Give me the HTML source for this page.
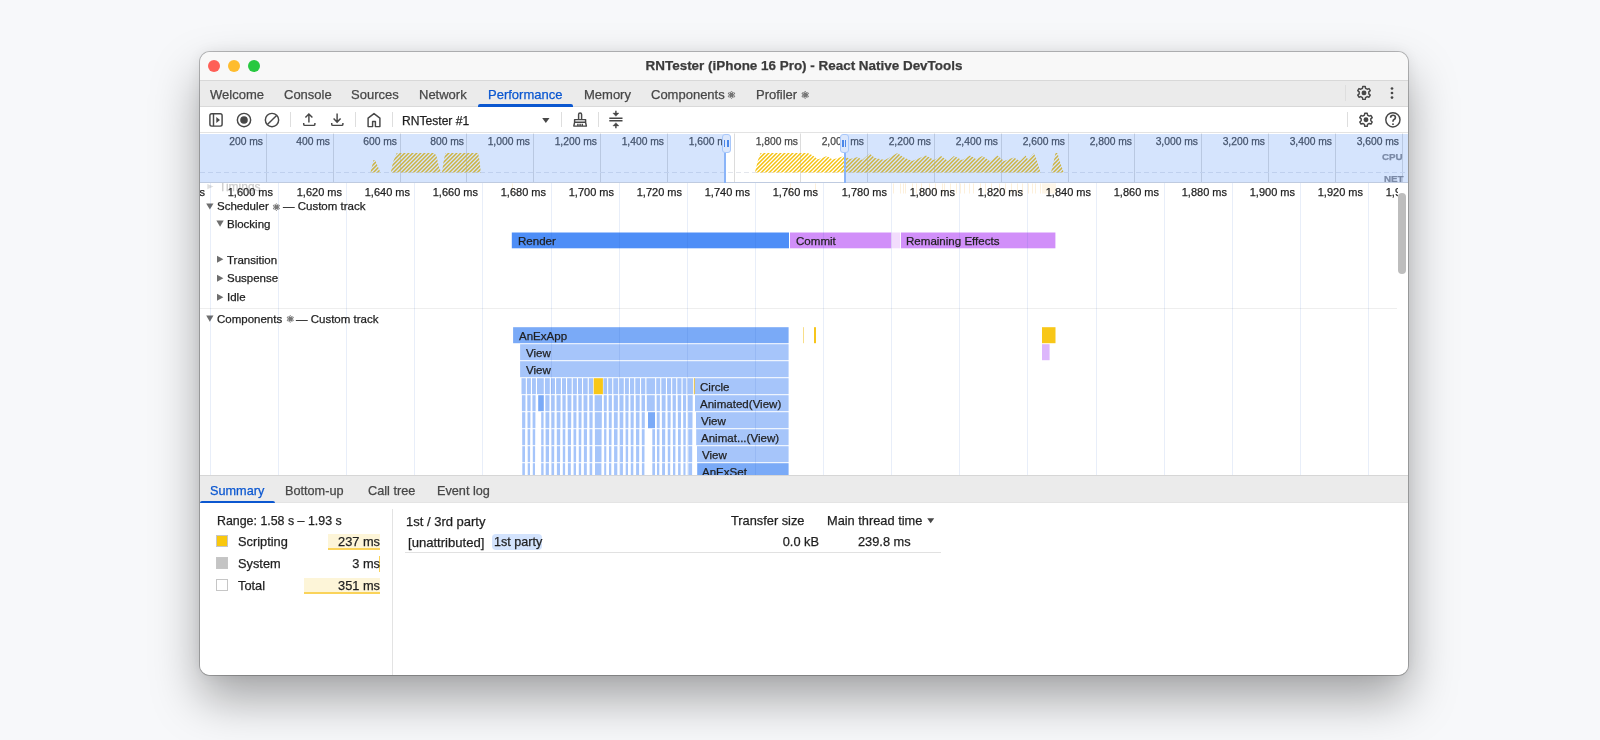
<!DOCTYPE html>
<html><head><meta charset="utf-8">
<style>
*{box-sizing:border-box;margin:0;padding:0}
html,body{width:1600px;height:740px;overflow:hidden;background:#f7f8fa;font-family:"Liberation Sans",sans-serif;color:#1f1f1f}
.a{position:absolute}
#win{position:absolute;left:200px;top:52px;width:1208px;height:623px;border-radius:10px;overflow:hidden;background:#fff;
 box-shadow:0 0 0 1px rgba(0,0,0,0.24),0 24px 48px rgba(0,0,0,0.34),0 0 14px rgba(0,0,0,0.07)}
.t{position:absolute;white-space:pre;line-height:1;-webkit-text-stroke:0.25px currentColor;will-change:transform}
.tab{font-size:13px;color:#474747}
.sep{position:absolute;width:1px;background:#dedede}
svg{position:absolute;left:0;top:0;overflow:visible}
</style></head><body>
<div id="win">

<div class="a" style="left:0;top:0;width:1208px;height:29px;background:#f8f8f8;border-bottom:1px solid #d8d8d8"></div>
<div class="a" style="left:7.8px;top:7.7px;width:12px;height:12px;border-radius:50%;background:#fe5f57"></div>
<div class="a" style="left:27.8px;top:7.7px;width:12px;height:12px;border-radius:50%;background:#febc2e"></div>
<div class="a" style="left:47.8px;top:7.7px;width:12px;height:12px;border-radius:50%;background:#28c840"></div>
<div class="t" style="left:0;width:1208px;text-align:center;top:7px;font-size:13.45px;font-weight:700;color:#3b3b3b">RNTester (iPhone 16 Pro) - React Native DevTools</div>
<div class="a" style="left:0;top:29px;width:1208px;height:26px;background:#ebebeb;border-bottom:1px solid #d9d9d9"></div>
<div class="t tab" style="left:10px;top:36.1px;color:#474747">Welcome</div>
<div class="t tab" style="left:84px;top:36.1px;color:#474747">Console</div>
<div class="t tab" style="left:151px;top:36.1px;color:#474747">Sources</div>
<div class="t tab" style="left:219px;top:36.1px;color:#474747">Network</div>
<div class="t tab" style="left:288px;top:36.1px;color:#0b57d0">Performance</div>
<div class="t tab" style="left:384px;top:36.1px;color:#474747">Memory</div>
<div class="t tab" style="left:451px;top:36.1px;color:#474747">Components</div>
<div class="t tab" style="left:556px;top:36.1px;color:#474747">Profiler</div>
<div class="a" style="left:278px;top:52px;width:95px;height:3px;background:#0b57d0;border-radius:2px 2px 0 0"></div>
<div class="sep" style="left:1145px;top:33px;height:16px"></div>
<svg width="1208" height="623" viewBox="200 52 1208 623"><ellipse cx="731.5" cy="94.9" rx="3.7" ry="1.11" transform="rotate(90 731.5 94.9)" fill="none" stroke="#6b6b6b" stroke-width="0.8"/><ellipse cx="731.5" cy="94.9" rx="3.7" ry="1.11" transform="rotate(30 731.5 94.9)" fill="none" stroke="#6b6b6b" stroke-width="0.8"/><ellipse cx="731.5" cy="94.9" rx="3.7" ry="1.11" transform="rotate(150 731.5 94.9)" fill="none" stroke="#6b6b6b" stroke-width="0.8"/><circle cx="731.5" cy="94.9" r="0.9" fill="#6b6b6b"/><ellipse cx="805.2" cy="94.9" rx="3.7" ry="1.11" transform="rotate(90 805.2 94.9)" fill="none" stroke="#6b6b6b" stroke-width="0.8"/><ellipse cx="805.2" cy="94.9" rx="3.7" ry="1.11" transform="rotate(30 805.2 94.9)" fill="none" stroke="#6b6b6b" stroke-width="0.8"/><ellipse cx="805.2" cy="94.9" rx="3.7" ry="1.11" transform="rotate(150 805.2 94.9)" fill="none" stroke="#6b6b6b" stroke-width="0.8"/><circle cx="805.2" cy="94.9" r="0.9" fill="#6b6b6b"/></svg>
<div class="a" style="left:0;top:55px;width:1208px;height:26px;background:#fff;border-bottom:1px solid #e3e3e3"></div>
<div class="sep" style="left:90.1px;top:60.3px;height:15px"></div>
<div class="sep" style="left:155.0px;top:60.3px;height:15px"></div>
<div class="sep" style="left:192.0px;top:60.3px;height:15px"></div>
<div class="sep" style="left:360.9px;top:60.3px;height:15px"></div>
<div class="sep" style="left:397.9px;top:60.3px;height:15px"></div>
<div class="sep" style="left:1146.9px;top:60.3px;height:15px"></div>
<div class="t" style="left:202.3px;top:62.6px;font-size:12.1px;color:#1f1f1f">RNTester #1</div>
<svg width="1208" height="623" viewBox="200 52 1208 623" style="z-index:5"><rect x="209.9" y="113.7" width="12.2" height="12.4" rx="1.8" stroke="#474747" fill="none" stroke-width="1.45"/><line x1="213.5" y1="113.7" x2="213.5" y2="126.1" stroke="#474747" fill="none" stroke-width="1.45"/><path d="M216.3 116.9 L220 120 L216.3 123.1 Z" fill="#474747"/><circle cx="244" cy="120" r="6.65" stroke="#474747" fill="none" stroke-width="1.45"/><circle cx="244" cy="120" r="3.8" fill="#474747"/><circle cx="272" cy="120" r="6.65" stroke="#474747" fill="none" stroke-width="1.45"/><line x1="276.6" y1="115.4" x2="267.4" y2="124.6" stroke="#474747" fill="none" stroke-width="1.45"/><path d="M303.7 123 v1.2 q0 1.2 1.2 1.2 h8.8 q1.2 0 1.2 -1.2 v-1.2" stroke="#474747" fill="none" stroke-width="1.45"/><path d="M308.9 122.6 V114.3 M305.4 117.6 L308.9 114 L312.4 117.6" stroke="#474747" fill="none" stroke-width="1.45"/><path d="M331.7 123 v1.2 q0 1.2 1.2 1.2 h8.8 q1.2 0 1.2 -1.2 v-1.2" stroke="#474747" fill="none" stroke-width="1.45"/><path d="M337.1 113.4 V121.8 M333.6 118.6 L337.1 122.1 L340.6 118.6" stroke="#474747" fill="none" stroke-width="1.45"/><path d="M368.1 126.6 V118.1 L374 113.6 L379.9 118.1 V126.6 H375.4 V121.5 H372.6 V126.6 Z" stroke="#474747" fill="none" stroke-width="1.45" stroke-linejoin="round"/><path d="M542.2 118 H549.5 L545.85 122.9 Z" fill="#474747"/><path d="M578.6 119.3 V114.5 a1.5 1.5 0 0 1 3 0 V119.3" stroke="#474747" fill="none" stroke-width="1.45"/><path d="M574.6 119.6 H585.6 V122.4 L586.4 126.1 H573.8 L574.6 122.4 Z" stroke="#474747" fill="none" stroke-width="1.45" stroke-linejoin="round"/><path d="M574.6 122.3 H585.6 M577.9 123.8 V126 M580.1 123.8 V126 M582.3 123.8 V126" stroke="#474747" fill="none" stroke-width="1.45"/><path d="M609.3 118.2 H622.5 M609.3 120.8 H622.5" stroke="#474747" stroke-width="1.5" fill="none"/><path d="M615.9 110.8 V114" stroke="#474747" fill="none" stroke-width="1.45"/><path d="M612.9 113.1 H618.9 L615.9 116.3 Z" fill="#474747" stroke="#474747" stroke-width="0.4" stroke-linejoin="round"/><path d="M615.9 128.2 V125" stroke="#474747" fill="none" stroke-width="1.45"/><path d="M612.9 125.9 H618.9 L615.9 122.7 Z" fill="#474747" stroke="#474747" stroke-width="0.4" stroke-linejoin="round"/><path d="M1362.44 88.26 L1362.76 86.42 L1365.24 86.42 L1365.56 88.26 L1367.24 89.22 L1369.00 88.59 L1370.23 90.73 L1368.80 91.93 L1368.80 93.87 L1370.23 95.07 L1369.00 97.21 L1367.24 96.58 L1365.56 97.54 L1365.24 99.38 L1362.76 99.38 L1362.44 97.54 L1360.76 96.58 L1359.00 97.21 L1357.77 95.07 L1359.20 93.87 L1359.20 91.93 L1357.77 90.73 L1359.00 88.59 L1360.76 89.22 Z" stroke="#474747" fill="none" stroke-width="1.45" stroke-linejoin="round"/><circle cx="1364" cy="92.9" r="2.45" fill="#474747"/><path d="M1364.44 115.16 L1364.76 113.32 L1367.24 113.32 L1367.56 115.16 L1369.24 116.12 L1371.00 115.49 L1372.23 117.63 L1370.80 118.83 L1370.80 120.77 L1372.23 121.97 L1371.00 124.11 L1369.24 123.48 L1367.56 124.44 L1367.24 126.28 L1364.76 126.28 L1364.44 124.44 L1362.76 123.48 L1361.00 124.11 L1359.77 121.97 L1361.20 120.77 L1361.20 118.83 L1359.77 117.63 L1361.00 115.49 L1362.76 116.12 Z" stroke="#474747" fill="none" stroke-width="1.45" stroke-linejoin="round"/><circle cx="1366" cy="119.8" r="2.45" fill="#474747"/><circle cx="1392" cy="88.5" r="1.35" fill="#474747"/><circle cx="1392" cy="93" r="1.35" fill="#474747"/><circle cx="1392" cy="97.6" r="1.35" fill="#474747"/><circle cx="1392.9" cy="119.8" r="7.1" stroke="#474747" fill="none" stroke-width="1.45"/><path d="M1390.6 117.7 q0 -2.5 2.4 -2.5 q2.4 0 2.4 2.3 q0 1.4 -1.4 2.1 q-1 0.5 -1 1.7 v0.5" stroke="#474747" fill="none" stroke-width="1.65"/><rect x="1392.2" y="123.4" width="1.6" height="1.6" fill="#474747"/></svg>
<div class="a" style="left:0;top:81px;width:1208px;height:50px;background:#fff"></div>
<svg width="1208" height="623" viewBox="200 52 1208 623"><defs><clipPath id="cpu"><polygon points="370.5,172.6 373.5,160 375,160 380.5,172.6"/><polygon points="390.8,172.6 393,162 396.7,153 434.4,153 436.5,156 439,167 441.4,172.6"/><polygon points="442,172.6 443.5,162 445.3,153 478.1,153 479.5,160 480.8,172.6"/><polygon points="754.9,172.6 758,160 760.5,153 807.7,153 812,155 818,159.2 822,158 826.9,155.9 832.5,159.5 838,158 844,156 850,159 858,157 862,160 869.6,153.6 875,158 885,160 897.5,153 903,157 912,161 926,155.6 934,160 941,156 948,161 954,156 962,160 970,155.6 976,159 982.5,156 990,161 997.5,155.6 1004,161 1013.75,157.5 1020,161 1025.6,155.6 1028,159.5 1033.75,153 1036,158 1040.6,172.6"/><polygon points="1051,172.6 1054,160 1055.5,153 1057.5,153 1060,162 1063.75,172.6"/></clipPath></defs><line x1="266.5" y1="133.5" x2="266.5" y2="183" stroke="#dcdcdc" stroke-width="1"/><line x1="333.5" y1="133.5" x2="333.5" y2="183" stroke="#dcdcdc" stroke-width="1"/><line x1="400.5" y1="133.5" x2="400.5" y2="183" stroke="#dcdcdc" stroke-width="1"/><line x1="466.5" y1="133.5" x2="466.5" y2="183" stroke="#dcdcdc" stroke-width="1"/><line x1="533.5" y1="133.5" x2="533.5" y2="183" stroke="#dcdcdc" stroke-width="1"/><line x1="600.5" y1="133.5" x2="600.5" y2="183" stroke="#dcdcdc" stroke-width="1"/><line x1="667.5" y1="133.5" x2="667.5" y2="183" stroke="#dcdcdc" stroke-width="1"/><line x1="734.5" y1="133.5" x2="734.5" y2="183" stroke="#dcdcdc" stroke-width="1"/><line x1="800.5" y1="133.5" x2="800.5" y2="183" stroke="#dcdcdc" stroke-width="1"/><line x1="867.5" y1="133.5" x2="867.5" y2="183" stroke="#dcdcdc" stroke-width="1"/><line x1="934.5" y1="133.5" x2="934.5" y2="183" stroke="#dcdcdc" stroke-width="1"/><line x1="1001.5" y1="133.5" x2="1001.5" y2="183" stroke="#dcdcdc" stroke-width="1"/><line x1="1068.5" y1="133.5" x2="1068.5" y2="183" stroke="#dcdcdc" stroke-width="1"/><line x1="1134.5" y1="133.5" x2="1134.5" y2="183" stroke="#dcdcdc" stroke-width="1"/><line x1="1201.5" y1="133.5" x2="1201.5" y2="183" stroke="#dcdcdc" stroke-width="1"/><line x1="1268.5" y1="133.5" x2="1268.5" y2="183" stroke="#dcdcdc" stroke-width="1"/><line x1="1335.5" y1="133.5" x2="1335.5" y2="183" stroke="#dcdcdc" stroke-width="1"/><line x1="1402.5" y1="133.5" x2="1402.5" y2="183" stroke="#dcdcdc" stroke-width="1"/><line x1="200" y1="172.5" x2="1408" y2="172.5" stroke="#e3e6ec" stroke-width="1" stroke-dasharray="5 3"/><path d="M346.9 175 L371.9 150 M350.9 175 L375.9 150 M354.9 175 L379.9 150 M358.9 175 L383.9 150 M362.9 175 L387.9 150 M366.9 175 L391.9 150 M370.9 175 L395.9 150 M374.9 175 L399.9 150 M378.9 175 L403.9 150 M382.9 175 L407.9 150 M386.9 175 L411.9 150 M390.9 175 L415.9 150 M394.9 175 L419.9 150 M398.9 175 L423.9 150 M402.9 175 L427.9 150 M406.9 175 L431.9 150 M410.9 175 L435.9 150 M414.9 175 L439.9 150 M418.9 175 L443.9 150 M422.9 175 L447.9 150 M426.9 175 L451.9 150 M430.9 175 L455.9 150 M434.9 175 L459.9 150 M438.9 175 L463.9 150 M442.9 175 L467.9 150 M446.9 175 L471.9 150 M450.9 175 L475.9 150 M454.9 175 L479.9 150 M458.9 175 L483.9 150 M462.9 175 L487.9 150 M466.9 175 L491.9 150 M470.9 175 L495.9 150 M474.9 175 L499.9 150 M478.9 175 L503.9 150 M482.9 175 L507.9 150 M486.9 175 L511.9 150 M490.9 175 L515.9 150 M494.9 175 L519.9 150 M498.9 175 L523.9 150 M502.9 175 L527.9 150 M506.9 175 L531.9 150 M510.9 175 L535.9 150 M514.9 175 L539.9 150 M518.9 175 L543.9 150 M522.9 175 L547.9 150 M526.9 175 L551.9 150 M530.9 175 L555.9 150 M534.9 175 L559.9 150 M538.9 175 L563.9 150 M542.9 175 L567.9 150 M546.9 175 L571.9 150 M550.9 175 L575.9 150 M554.9 175 L579.9 150 M558.9 175 L583.9 150 M562.9 175 L587.9 150 M566.9 175 L591.9 150 M570.9 175 L595.9 150 M574.9 175 L599.9 150 M578.9 175 L603.9 150 M582.9 175 L607.9 150 M586.9 175 L611.9 150 M590.9 175 L615.9 150 M594.9 175 L619.9 150 M598.9 175 L623.9 150 M602.9 175 L627.9 150 M606.9 175 L631.9 150 M610.9 175 L635.9 150 M614.9 175 L639.9 150 M618.9 175 L643.9 150 M622.9 175 L647.9 150 M626.9 175 L651.9 150 M630.9 175 L655.9 150 M634.9 175 L659.9 150 M638.9 175 L663.9 150 M642.9 175 L667.9 150 M646.9 175 L671.9 150 M650.9 175 L675.9 150 M654.9 175 L679.9 150 M658.9 175 L683.9 150 M662.9 175 L687.9 150 M666.9 175 L691.9 150 M670.9 175 L695.9 150 M674.9 175 L699.9 150 M678.9 175 L703.9 150 M682.9 175 L707.9 150 M686.9 175 L711.9 150 M690.9 175 L715.9 150 M694.9 175 L719.9 150 M698.9 175 L723.9 150 M702.9 175 L727.9 150 M706.9 175 L731.9 150 M710.9 175 L735.9 150 M714.9 175 L739.9 150 M718.9 175 L743.9 150 M722.9 175 L747.9 150 M726.9 175 L751.9 150 M730.9 175 L755.9 150 M734.9 175 L759.9 150 M738.9 175 L763.9 150 M742.9 175 L767.9 150 M746.9 175 L771.9 150 M750.9 175 L775.9 150 M754.9 175 L779.9 150 M758.9 175 L783.9 150 M762.9 175 L787.9 150 M766.9 175 L791.9 150 M770.9 175 L795.9 150 M774.9 175 L799.9 150 M778.9 175 L803.9 150 M782.9 175 L807.9 150 M786.9 175 L811.9 150 M790.9 175 L815.9 150 M794.9 175 L819.9 150 M798.9 175 L823.9 150 M802.9 175 L827.9 150 M806.9 175 L831.9 150 M810.9 175 L835.9 150 M814.9 175 L839.9 150 M818.9 175 L843.9 150 M822.9 175 L847.9 150 M826.9 175 L851.9 150 M830.9 175 L855.9 150 M834.9 175 L859.9 150 M838.9 175 L863.9 150 M842.9 175 L867.9 150 M846.9 175 L871.9 150 M850.9 175 L875.9 150 M854.9 175 L879.9 150 M858.9 175 L883.9 150 M862.9 175 L887.9 150 M866.9 175 L891.9 150 M870.9 175 L895.9 150 M874.9 175 L899.9 150 M878.9 175 L903.9 150 M882.9 175 L907.9 150 M886.9 175 L911.9 150 M890.9 175 L915.9 150 M894.9 175 L919.9 150 M898.9 175 L923.9 150 M902.9 175 L927.9 150 M906.9 175 L931.9 150 M910.9 175 L935.9 150 M914.9 175 L939.9 150 M918.9 175 L943.9 150 M922.9 175 L947.9 150 M926.9 175 L951.9 150 M930.9 175 L955.9 150 M934.9 175 L959.9 150 M938.9 175 L963.9 150 M942.9 175 L967.9 150 M946.9 175 L971.9 150 M950.9 175 L975.9 150 M954.9 175 L979.9 150 M958.9 175 L983.9 150 M962.9 175 L987.9 150 M966.9 175 L991.9 150 M970.9 175 L995.9 150 M974.9 175 L999.9 150 M978.9 175 L1003.9 150 M982.9 175 L1007.9 150 M986.9 175 L1011.9 150 M990.9 175 L1015.9 150 M994.9 175 L1019.9 150 M998.9 175 L1023.9 150 M1002.9 175 L1027.9 150 M1006.9 175 L1031.9 150 M1010.9 175 L1035.9 150 M1014.9 175 L1039.9 150 M1018.9 175 L1043.9 150 M1022.9 175 L1047.9 150 M1026.9 175 L1051.9 150 M1030.9 175 L1055.9 150 M1034.9 175 L1059.9 150 M1038.9 175 L1063.9 150 M1042.9 175 L1067.9 150 M1046.9 175 L1071.9 150 M1050.9 175 L1075.9 150 M1054.9 175 L1079.9 150 M1058.9 175 L1083.9 150 M1062.9 175 L1087.9 150 M1066.9 175 L1091.9 150" stroke="#f5c211" stroke-width="1.45" clip-path="url(#cpu)"/></svg>
<div class="t" style="left:-136.9px;width:200px;text-align:right;top:85.2px;font-size:10.3px;color:#474747">200 ms</div><div class="t" style="left:-70.1px;width:200px;text-align:right;top:85.2px;font-size:10.3px;color:#474747">400 ms</div><div class="t" style="left:-3.3px;width:200px;text-align:right;top:85.2px;font-size:10.3px;color:#474747">600 ms</div><div class="t" style="left:63.5px;width:200px;text-align:right;top:85.2px;font-size:10.3px;color:#474747">800 ms</div><div class="t" style="left:130.3px;width:200px;text-align:right;top:85.2px;font-size:10.3px;color:#474747">1,000 ms</div><div class="t" style="left:197.1px;width:200px;text-align:right;top:85.2px;font-size:10.3px;color:#474747">1,200 ms</div><div class="t" style="left:263.9px;width:200px;text-align:right;top:85.2px;font-size:10.3px;color:#474747">1,400 ms</div><div class="t" style="left:330.7px;width:200px;text-align:right;top:85.2px;font-size:10.3px;color:#474747">1,600 ms</div><div class="t" style="left:397.5px;width:200px;text-align:right;top:85.2px;font-size:10.3px;color:#474747">1,800 ms</div><div class="t" style="left:464.3px;width:200px;text-align:right;top:85.2px;font-size:10.3px;color:#474747">2,000 ms</div><div class="t" style="left:531.1px;width:200px;text-align:right;top:85.2px;font-size:10.3px;color:#474747">2,200 ms</div><div class="t" style="left:597.9px;width:200px;text-align:right;top:85.2px;font-size:10.3px;color:#474747">2,400 ms</div><div class="t" style="left:664.7px;width:200px;text-align:right;top:85.2px;font-size:10.3px;color:#474747">2,600 ms</div><div class="t" style="left:731.5px;width:200px;text-align:right;top:85.2px;font-size:10.3px;color:#474747">2,800 ms</div><div class="t" style="left:798.3px;width:200px;text-align:right;top:85.2px;font-size:10.3px;color:#474747">3,000 ms</div><div class="t" style="left:865.1px;width:200px;text-align:right;top:85.2px;font-size:10.3px;color:#474747">3,200 ms</div><div class="t" style="left:931.9px;width:200px;text-align:right;top:85.2px;font-size:10.3px;color:#474747">3,400 ms</div><div class="t" style="left:998.7px;width:200px;text-align:right;top:85.2px;font-size:10.3px;color:#474747">3,600 ms</div>
<div class="a" style="left:0;top:81.5px;width:525.4px;height:49.5px;background:rgba(66,133,244,0.22)"></div>
<div class="a" style="left:644.6px;top:81.5px;width:563.4px;height:49.5px;background:rgba(66,133,244,0.22)"></div>
<div class="t" style="left:1182.3px;top:100.2px;font-size:9.8px;font-weight:700;color:#7b8aa6">CPU</div>
<div class="t" style="left:1183.9px;top:122.0px;font-size:9.8px;font-weight:700;color:#7b8aa6">NET</div>
<div class="a" style="left:0;top:130.3px;width:1208px;height:1px;background:#bfcbe0"></div>
<div class="a" style="left:524.4px;top:100px;width:2px;height:30.5px;background:#8ab4f8"></div>
<div class="a" style="left:521.8px;top:82.3px;width:9.4px;height:18.4px;border-radius:3px;background:#dbe7fc;border:1px solid #a8c7fa"></div>
<div class="a" style="left:524.1px;top:88.2px;width:1.4px;height:6.6px;background:#4a86e8"></div>
<div class="a" style="left:527.4px;top:88.2px;width:1.4px;height:6.6px;background:#4a86e8"></div>
<div class="a" style="left:643.6px;top:100px;width:2px;height:30.5px;background:#8ab4f8"></div>
<div class="a" style="left:639.9px;top:82.3px;width:9.4px;height:18.4px;border-radius:3px;background:#dbe7fc;border:1px solid #a8c7fa"></div>
<div class="a" style="left:642.2px;top:88.2px;width:1.4px;height:6.6px;background:#4a86e8"></div>
<div class="a" style="left:645.1px;top:88.2px;width:1.4px;height:6.6px;background:#4a86e8"></div>
<div class="a" style="left:0;top:131px;width:300px;height:17px;overflow:hidden"><div class="t" style="left:19.4px;top:-2.0px;font-size:12px;color:#a3a3a3">Timings</div></div><svg width="1208" height="623" viewBox="200 52 1208 623"><path d="M207.3 184 L213.5 186.6 L207.3 189.2 Z" fill="#c4c4c4"/></svg><svg width="1208" height="623" viewBox="200 52 1208 623"><rect x="512" y="183.5" width="1" height="10" fill="#fbe3bd"/><rect x="790" y="183.5" width="1" height="10" fill="#fbe3bd"/><rect x="815" y="183.5" width="1" height="10" fill="#fbe3bd"/><rect x="893" y="183.5" width="1" height="10" fill="#fbe3bd"/><rect x="900" y="183.5" width="1" height="10" fill="#fbe3bd"/><rect x="903" y="183.5" width="1" height="10" fill="#fbe3bd"/><rect x="905" y="183.5" width="1" height="10" fill="#fbe3bd"/><rect x="912" y="183.5" width="1" height="10" fill="#fbe3bd"/><rect x="916" y="183.5" width="1" height="10" fill="#fbe3bd"/><rect x="921" y="183.5" width="1" height="10" fill="#fbe3bd"/><rect x="929" y="183.5" width="1" height="10" fill="#fbe3bd"/><rect x="935" y="183.5" width="1" height="10" fill="#fbe3bd"/><rect x="942" y="183.5" width="1" height="10" fill="#fbe3bd"/><rect x="944" y="183.5" width="1" height="10" fill="#fbe3bd"/><rect x="950" y="183.5" width="1" height="10" fill="#fbe3bd"/><rect x="956" y="183.5" width="1" height="10" fill="#fbe3bd"/><rect x="960" y="183.5" width="1" height="10" fill="#fbe3bd"/><rect x="964" y="183.5" width="1" height="10" fill="#fbe3bd"/><rect x="969" y="183.5" width="1" height="10" fill="#fbe3bd"/><rect x="973" y="183.5" width="1" height="10" fill="#fbe3bd"/><rect x="980" y="183.5" width="1" height="10" fill="#fbe3bd"/><rect x="985" y="183.5" width="1" height="10" fill="#fbe3bd"/><rect x="991" y="183.5" width="1" height="10" fill="#fbe3bd"/><rect x="999" y="183.5" width="1" height="10" fill="#fbe3bd"/><rect x="1005" y="183.5" width="1" height="10" fill="#fbe3bd"/><rect x="1011" y="183.5" width="1" height="10" fill="#fbe3bd"/><rect x="1017" y="183.5" width="1" height="10" fill="#fbe3bd"/><rect x="1022" y="183.5" width="1" height="10" fill="#fbe3bd"/><rect x="1028" y="183.5" width="1" height="10" fill="#fbe3bd"/><rect x="1032" y="183.5" width="1" height="10" fill="#fbe3bd"/><rect x="1035" y="183.5" width="1" height="10" fill="#fbe3bd"/><rect x="1040" y="183.5" width="1" height="10" fill="#fbe3bd"/><rect x="1042" y="183.5" width="14" height="10" fill="#fdeed6"/></svg><div class="a" style="left:0;top:131px;width:1198px;height:17px;background:rgba(255,255,255,0.45)"></div><div class="t" style="left:-194.7px;width:200px;text-align:right;top:134.8px;font-size:11px;color:#1f1f1f">1,580 ms</div><div class="t" style="left:-126.58px;width:200px;text-align:right;top:134.8px;font-size:11px;color:#1f1f1f">1,600 ms</div><div class="t" style="left:-58.46px;width:200px;text-align:right;top:134.8px;font-size:11px;color:#1f1f1f">1,620 ms</div><div class="t" style="left:9.66px;width:200px;text-align:right;top:134.8px;font-size:11px;color:#1f1f1f">1,640 ms</div><div class="t" style="left:77.78px;width:200px;text-align:right;top:134.8px;font-size:11px;color:#1f1f1f">1,660 ms</div><div class="t" style="left:145.9px;width:200px;text-align:right;top:134.8px;font-size:11px;color:#1f1f1f">1,680 ms</div><div class="t" style="left:214.02px;width:200px;text-align:right;top:134.8px;font-size:11px;color:#1f1f1f">1,700 ms</div><div class="t" style="left:282.14px;width:200px;text-align:right;top:134.8px;font-size:11px;color:#1f1f1f">1,720 ms</div><div class="t" style="left:350.26px;width:200px;text-align:right;top:134.8px;font-size:11px;color:#1f1f1f">1,740 ms</div><div class="t" style="left:418.38px;width:200px;text-align:right;top:134.8px;font-size:11px;color:#1f1f1f">1,760 ms</div><div class="t" style="left:486.5px;width:200px;text-align:right;top:134.8px;font-size:11px;color:#1f1f1f">1,780 ms</div><div class="t" style="left:554.62px;width:200px;text-align:right;top:134.8px;font-size:11px;color:#1f1f1f">1,800 ms</div><div class="t" style="left:622.74px;width:200px;text-align:right;top:134.8px;font-size:11px;color:#1f1f1f">1,820 ms</div><div class="t" style="left:690.86px;width:200px;text-align:right;top:134.8px;font-size:11px;color:#1f1f1f">1,840 ms</div><div class="t" style="left:758.98px;width:200px;text-align:right;top:134.8px;font-size:11px;color:#1f1f1f">1,860 ms</div><div class="t" style="left:827.1px;width:200px;text-align:right;top:134.8px;font-size:11px;color:#1f1f1f">1,880 ms</div><div class="t" style="left:895.22px;width:200px;text-align:right;top:134.8px;font-size:11px;color:#1f1f1f">1,900 ms</div><div class="t" style="left:963.34px;width:200px;text-align:right;top:134.8px;font-size:11px;color:#1f1f1f">1,920 ms</div><div class="t" style="left:1031.46px;width:200px;text-align:right;top:134.8px;font-size:11px;color:#1f1f1f">1,940 ms</div><div class="a" style="left:1197.5px;top:131px;width:11px;height:292px;background:#fff"></div>
<svg width="1208" height="623" viewBox="200 52 1208 623"><path d="M206.2 203.4 H213.5 L209.85 209.6 Z" fill="#6e6e6e"/><path d="M216.4 220.6 H223.70000000000002 L220.05 226.79999999999998 Z" fill="#6e6e6e"/><path d="M217 255.8 L223.4 259.3 L217 262.8 Z" fill="#6e6e6e"/><path d="M217 274.8 L223.4 278.3 L217 281.8 Z" fill="#6e6e6e"/><path d="M217 293.7 L223.4 297.2 L217 300.7 Z" fill="#6e6e6e"/><path d="M206.2 315.6 H213.5 L209.85 321.8 Z" fill="#6e6e6e"/><line x1="200" y1="308.5" x2="1397" y2="308.5" stroke="#eeeeee" stroke-width="1"/><rect x="511.80" y="232.50" width="277.20" height="15.80" fill="#4e8ef7"/><rect x="790.00" y="232.50" width="101.00" height="15.80" fill="#d18ff9"/><rect x="891.00" y="232.50" width="9.20" height="15.80" fill="#f2dcfd"/><rect x="901.00" y="232.50" width="154.40" height="15.80" fill="#d18ff9"/><rect x="513.10" y="327.20" width="275.50" height="16.00" fill="#7aaaf7"/><rect x="520.10" y="344.20" width="268.50" height="16.00" fill="#a6c5fa"/><rect x="520.10" y="361.20" width="268.50" height="16.00" fill="#a6c5fa"/><rect x="803.00" y="327.20" width="1.00" height="16.00" fill="#f8de8a"/><rect x="814.00" y="327.20" width="2.00" height="16.00" fill="#f7c51b"/><rect x="1042.00" y="327.20" width="13.50" height="16.00" fill="#f8c718"/><rect x="1042.00" y="344.20" width="7.60" height="16.00" fill="#ddb6fc"/><rect x="521.50" y="378.20" width="4.30" height="16.00" fill="#a6c5fa"/><rect x="526.90" y="378.20" width="4.00" height="16.00" fill="#a6c5fa"/><rect x="532.00" y="378.20" width="3.90" height="16.00" fill="#a6c5fa"/><rect x="537.00" y="378.20" width="6.80" height="16.00" fill="#a6c5fa"/><rect x="544.90" y="378.20" width="4.90" height="16.00" fill="#a6c5fa"/><rect x="550.90" y="378.20" width="4.10" height="16.00" fill="#a6c5fa"/><rect x="556.10" y="378.20" width="4.80" height="16.00" fill="#a6c5fa"/><rect x="562.00" y="378.20" width="4.00" height="16.00" fill="#a6c5fa"/><rect x="567.10" y="378.20" width="4.60" height="16.00" fill="#a6c5fa"/><rect x="572.80" y="378.20" width="4.10" height="16.00" fill="#a6c5fa"/><rect x="578.00" y="378.20" width="4.00" height="16.00" fill="#a6c5fa"/><rect x="583.10" y="378.20" width="4.60" height="16.00" fill="#a6c5fa"/><rect x="588.80" y="378.20" width="4.30" height="16.00" fill="#a6c5fa"/><rect x="593.70" y="378.20" width="9.20" height="16.00" fill="#f8c718"/><rect x="603.40" y="378.20" width="3.70" height="16.00" fill="#a6c5fa"/><rect x="608.20" y="378.20" width="4.00" height="16.00" fill="#a6c5fa"/><rect x="613.30" y="378.20" width="4.90" height="16.00" fill="#a6c5fa"/><rect x="619.30" y="378.20" width="4.50" height="16.00" fill="#a6c5fa"/><rect x="624.90" y="378.20" width="4.00" height="16.00" fill="#a6c5fa"/><rect x="630.00" y="378.20" width="4.20" height="16.00" fill="#a6c5fa"/><rect x="635.30" y="378.20" width="4.70" height="16.00" fill="#a6c5fa"/><rect x="641.10" y="378.20" width="4.20" height="16.00" fill="#a6c5fa"/><rect x="646.40" y="378.20" width="8.70" height="16.00" fill="#a6c5fa"/><rect x="656.20" y="378.20" width="4.00" height="16.00" fill="#a6c5fa"/><rect x="661.30" y="378.20" width="4.60" height="16.00" fill="#a6c5fa"/><rect x="667.00" y="378.20" width="4.10" height="16.00" fill="#a6c5fa"/><rect x="672.20" y="378.20" width="4.00" height="16.00" fill="#a6c5fa"/><rect x="677.30" y="378.20" width="4.20" height="16.00" fill="#a6c5fa"/><rect x="682.60" y="378.20" width="3.80" height="16.00" fill="#a6c5fa"/><rect x="687.50" y="378.20" width="5.50" height="16.00" fill="#a6c5fa"/><rect x="521.90" y="395.20" width="3.60" height="16.00" fill="#a6c5fa"/><rect x="527.30" y="395.20" width="3.30" height="16.00" fill="#a6c5fa"/><rect x="532.40" y="395.20" width="3.20" height="16.00" fill="#a6c5fa"/><rect x="538.20" y="395.20" width="5.60" height="16.00" fill="#7aaaf7"/><rect x="545.30" y="395.20" width="4.20" height="16.00" fill="#a6c5fa"/><rect x="551.30" y="395.20" width="3.40" height="16.00" fill="#a6c5fa"/><rect x="556.50" y="395.20" width="4.10" height="16.00" fill="#a6c5fa"/><rect x="562.40" y="395.20" width="3.30" height="16.00" fill="#a6c5fa"/><rect x="567.50" y="395.20" width="3.90" height="16.00" fill="#a6c5fa"/><rect x="573.20" y="395.20" width="3.40" height="16.00" fill="#a6c5fa"/><rect x="578.40" y="395.20" width="3.30" height="16.00" fill="#a6c5fa"/><rect x="583.50" y="395.20" width="3.90" height="16.00" fill="#a6c5fa"/><rect x="589.20" y="395.20" width="3.60" height="16.00" fill="#a6c5fa"/><rect x="594.60" y="395.20" width="7.40" height="16.00" fill="#a6c5fa"/><rect x="603.80" y="395.20" width="3.00" height="16.00" fill="#a6c5fa"/><rect x="608.60" y="395.20" width="3.30" height="16.00" fill="#a6c5fa"/><rect x="613.70" y="395.20" width="4.20" height="16.00" fill="#a6c5fa"/><rect x="619.70" y="395.20" width="3.80" height="16.00" fill="#a6c5fa"/><rect x="625.30" y="395.20" width="3.30" height="16.00" fill="#a6c5fa"/><rect x="630.40" y="395.20" width="3.50" height="16.00" fill="#a6c5fa"/><rect x="635.70" y="395.20" width="4.00" height="16.00" fill="#a6c5fa"/><rect x="641.50" y="395.20" width="3.50" height="16.00" fill="#a6c5fa"/><rect x="646.80" y="395.20" width="8.00" height="16.00" fill="#a6c5fa"/><rect x="656.60" y="395.20" width="3.30" height="16.00" fill="#a6c5fa"/><rect x="661.70" y="395.20" width="3.90" height="16.00" fill="#a6c5fa"/><rect x="667.40" y="395.20" width="3.40" height="16.00" fill="#a6c5fa"/><rect x="672.60" y="395.20" width="3.30" height="16.00" fill="#a6c5fa"/><rect x="677.70" y="395.20" width="3.50" height="16.00" fill="#a6c5fa"/><rect x="683.00" y="395.20" width="3.10" height="16.00" fill="#a6c5fa"/><rect x="687.90" y="395.20" width="4.80" height="16.00" fill="#a6c5fa"/><rect x="522.10" y="412.20" width="3.20" height="16.00" fill="#a6c5fa"/><rect x="527.50" y="412.20" width="2.90" height="16.00" fill="#a6c5fa"/><rect x="532.60" y="412.20" width="2.80" height="16.00" fill="#a6c5fa"/><rect x="541.20" y="412.20" width="2.40" height="16.00" fill="#a6c5fa"/><rect x="545.50" y="412.20" width="3.80" height="16.00" fill="#a6c5fa"/><rect x="551.50" y="412.20" width="3.00" height="16.00" fill="#a6c5fa"/><rect x="556.70" y="412.20" width="3.70" height="16.00" fill="#a6c5fa"/><rect x="562.60" y="412.20" width="2.90" height="16.00" fill="#a6c5fa"/><rect x="567.70" y="412.20" width="3.50" height="16.00" fill="#a6c5fa"/><rect x="573.40" y="412.20" width="3.00" height="16.00" fill="#a6c5fa"/><rect x="578.60" y="412.20" width="2.90" height="16.00" fill="#a6c5fa"/><rect x="583.70" y="412.20" width="3.50" height="16.00" fill="#a6c5fa"/><rect x="589.40" y="412.20" width="3.20" height="16.00" fill="#a6c5fa"/><rect x="594.80" y="412.20" width="7.00" height="16.00" fill="#a6c5fa"/><rect x="604.00" y="412.20" width="2.60" height="16.00" fill="#a6c5fa"/><rect x="608.80" y="412.20" width="2.90" height="16.00" fill="#a6c5fa"/><rect x="613.90" y="412.20" width="3.80" height="16.00" fill="#a6c5fa"/><rect x="619.90" y="412.20" width="3.40" height="16.00" fill="#a6c5fa"/><rect x="625.50" y="412.20" width="2.90" height="16.00" fill="#a6c5fa"/><rect x="630.60" y="412.20" width="3.10" height="16.00" fill="#a6c5fa"/><rect x="635.90" y="412.20" width="3.60" height="16.00" fill="#a6c5fa"/><rect x="641.70" y="412.20" width="3.10" height="16.00" fill="#a6c5fa"/><rect x="648.00" y="412.20" width="7.00" height="16.00" fill="#7aaaf7"/><rect x="656.80" y="412.20" width="2.90" height="16.00" fill="#a6c5fa"/><rect x="661.90" y="412.20" width="3.50" height="16.00" fill="#a6c5fa"/><rect x="667.60" y="412.20" width="3.00" height="16.00" fill="#a6c5fa"/><rect x="672.80" y="412.20" width="2.90" height="16.00" fill="#a6c5fa"/><rect x="677.90" y="412.20" width="3.10" height="16.00" fill="#a6c5fa"/><rect x="683.20" y="412.20" width="2.70" height="16.00" fill="#a6c5fa"/><rect x="688.10" y="412.20" width="4.40" height="16.00" fill="#a6c5fa"/><rect x="522.20" y="429.20" width="2.90" height="16.00" fill="#a6c5fa"/><rect x="527.60" y="429.20" width="2.60" height="16.00" fill="#a6c5fa"/><rect x="532.70" y="429.20" width="2.50" height="16.00" fill="#a6c5fa"/><rect x="541.20" y="429.20" width="2.40" height="16.00" fill="#a6c5fa"/><rect x="545.60" y="429.20" width="3.50" height="16.00" fill="#a6c5fa"/><rect x="551.60" y="429.20" width="2.70" height="16.00" fill="#a6c5fa"/><rect x="556.80" y="429.20" width="3.40" height="16.00" fill="#a6c5fa"/><rect x="562.70" y="429.20" width="2.60" height="16.00" fill="#a6c5fa"/><rect x="567.80" y="429.20" width="3.20" height="16.00" fill="#a6c5fa"/><rect x="573.50" y="429.20" width="2.70" height="16.00" fill="#a6c5fa"/><rect x="578.70" y="429.20" width="2.60" height="16.00" fill="#a6c5fa"/><rect x="583.80" y="429.20" width="3.20" height="16.00" fill="#a6c5fa"/><rect x="589.50" y="429.20" width="2.90" height="16.00" fill="#a6c5fa"/><rect x="594.90" y="429.20" width="6.70" height="16.00" fill="#a6c5fa"/><rect x="604.10" y="429.20" width="2.30" height="16.00" fill="#a6c5fa"/><rect x="608.90" y="429.20" width="2.60" height="16.00" fill="#a6c5fa"/><rect x="614.00" y="429.20" width="3.50" height="16.00" fill="#a6c5fa"/><rect x="620.00" y="429.20" width="3.10" height="16.00" fill="#a6c5fa"/><rect x="625.60" y="429.20" width="2.60" height="16.00" fill="#a6c5fa"/><rect x="630.70" y="429.20" width="2.80" height="16.00" fill="#a6c5fa"/><rect x="636.00" y="429.20" width="3.30" height="16.00" fill="#a6c5fa"/><rect x="641.80" y="429.20" width="2.80" height="16.00" fill="#a6c5fa"/><rect x="652.30" y="429.20" width="2.70" height="16.00" fill="#a6c5fa"/><rect x="656.90" y="429.20" width="2.60" height="16.00" fill="#a6c5fa"/><rect x="662.00" y="429.20" width="3.20" height="16.00" fill="#a6c5fa"/><rect x="667.70" y="429.20" width="2.70" height="16.00" fill="#a6c5fa"/><rect x="672.90" y="429.20" width="2.60" height="16.00" fill="#a6c5fa"/><rect x="678.00" y="429.20" width="2.80" height="16.00" fill="#a6c5fa"/><rect x="683.30" y="429.20" width="2.40" height="16.00" fill="#a6c5fa"/><rect x="688.20" y="429.20" width="4.10" height="16.00" fill="#a6c5fa"/><rect x="522.30" y="446.20" width="2.70" height="16.00" fill="#a6c5fa"/><rect x="527.70" y="446.20" width="2.40" height="16.00" fill="#a6c5fa"/><rect x="532.80" y="446.20" width="2.30" height="16.00" fill="#a6c5fa"/><rect x="541.20" y="446.20" width="2.40" height="16.00" fill="#a6c5fa"/><rect x="545.70" y="446.20" width="3.30" height="16.00" fill="#a6c5fa"/><rect x="551.70" y="446.20" width="2.50" height="16.00" fill="#a6c5fa"/><rect x="556.90" y="446.20" width="3.20" height="16.00" fill="#a6c5fa"/><rect x="562.80" y="446.20" width="2.40" height="16.00" fill="#a6c5fa"/><rect x="567.90" y="446.20" width="3.00" height="16.00" fill="#a6c5fa"/><rect x="573.60" y="446.20" width="2.50" height="16.00" fill="#a6c5fa"/><rect x="578.80" y="446.20" width="2.40" height="16.00" fill="#a6c5fa"/><rect x="583.90" y="446.20" width="3.00" height="16.00" fill="#a6c5fa"/><rect x="589.60" y="446.20" width="2.70" height="16.00" fill="#a6c5fa"/><rect x="595.00" y="446.20" width="6.50" height="16.00" fill="#a6c5fa"/><rect x="604.20" y="446.20" width="2.10" height="16.00" fill="#a6c5fa"/><rect x="609.00" y="446.20" width="2.40" height="16.00" fill="#a6c5fa"/><rect x="614.10" y="446.20" width="3.30" height="16.00" fill="#a6c5fa"/><rect x="620.10" y="446.20" width="2.90" height="16.00" fill="#a6c5fa"/><rect x="625.70" y="446.20" width="2.40" height="16.00" fill="#a6c5fa"/><rect x="630.80" y="446.20" width="2.60" height="16.00" fill="#a6c5fa"/><rect x="636.10" y="446.20" width="3.10" height="16.00" fill="#a6c5fa"/><rect x="641.90" y="446.20" width="2.60" height="16.00" fill="#a6c5fa"/><rect x="652.30" y="446.20" width="2.70" height="16.00" fill="#a6c5fa"/><rect x="657.00" y="446.20" width="2.40" height="16.00" fill="#a6c5fa"/><rect x="662.10" y="446.20" width="3.00" height="16.00" fill="#a6c5fa"/><rect x="667.80" y="446.20" width="2.50" height="16.00" fill="#a6c5fa"/><rect x="673.00" y="446.20" width="2.40" height="16.00" fill="#a6c5fa"/><rect x="678.10" y="446.20" width="2.60" height="16.00" fill="#a6c5fa"/><rect x="683.40" y="446.20" width="2.20" height="16.00" fill="#a6c5fa"/><rect x="688.30" y="446.20" width="3.90" height="16.00" fill="#a6c5fa"/><rect x="522.30" y="463.20" width="2.60" height="16.00" fill="#a6c5fa"/><rect x="527.70" y="463.20" width="2.30" height="16.00" fill="#a6c5fa"/><rect x="532.80" y="463.20" width="2.20" height="16.00" fill="#a6c5fa"/><rect x="541.20" y="463.20" width="2.40" height="16.00" fill="#a6c5fa"/><rect x="545.70" y="463.20" width="3.20" height="16.00" fill="#a6c5fa"/><rect x="551.70" y="463.20" width="2.40" height="16.00" fill="#a6c5fa"/><rect x="556.90" y="463.20" width="3.10" height="16.00" fill="#a6c5fa"/><rect x="562.80" y="463.20" width="2.30" height="16.00" fill="#a6c5fa"/><rect x="567.90" y="463.20" width="2.90" height="16.00" fill="#a6c5fa"/><rect x="573.60" y="463.20" width="2.40" height="16.00" fill="#a6c5fa"/><rect x="578.80" y="463.20" width="2.30" height="16.00" fill="#a6c5fa"/><rect x="583.90" y="463.20" width="2.90" height="16.00" fill="#a6c5fa"/><rect x="589.60" y="463.20" width="2.60" height="16.00" fill="#a6c5fa"/><rect x="595.00" y="463.20" width="6.40" height="16.00" fill="#a6c5fa"/><rect x="604.20" y="463.20" width="2.00" height="16.00" fill="#a6c5fa"/><rect x="609.00" y="463.20" width="2.30" height="16.00" fill="#a6c5fa"/><rect x="614.10" y="463.20" width="3.20" height="16.00" fill="#a6c5fa"/><rect x="620.10" y="463.20" width="2.80" height="16.00" fill="#a6c5fa"/><rect x="625.70" y="463.20" width="2.30" height="16.00" fill="#a6c5fa"/><rect x="630.80" y="463.20" width="2.50" height="16.00" fill="#a6c5fa"/><rect x="636.10" y="463.20" width="3.00" height="16.00" fill="#a6c5fa"/><rect x="641.90" y="463.20" width="2.50" height="16.00" fill="#a6c5fa"/><rect x="652.30" y="463.20" width="2.70" height="16.00" fill="#a6c5fa"/><rect x="657.00" y="463.20" width="2.30" height="16.00" fill="#a6c5fa"/><rect x="662.10" y="463.20" width="2.90" height="16.00" fill="#a6c5fa"/><rect x="667.80" y="463.20" width="2.40" height="16.00" fill="#a6c5fa"/><rect x="673.00" y="463.20" width="2.30" height="16.00" fill="#a6c5fa"/><rect x="678.10" y="463.20" width="2.50" height="16.00" fill="#a6c5fa"/><rect x="683.40" y="463.20" width="2.10" height="16.00" fill="#a6c5fa"/><rect x="688.30" y="463.20" width="3.80" height="16.00" fill="#a6c5fa"/><rect x="694.00" y="378.20" width="94.60" height="16.00" fill="#a6c5fa"/><rect x="695.00" y="395.20" width="93.60" height="16.00" fill="#a6c5fa"/><rect x="696.00" y="412.20" width="92.60" height="16.00" fill="#a6c5fa"/><rect x="696.20" y="429.20" width="92.40" height="16.00" fill="#a6c5fa"/><rect x="697.00" y="446.20" width="91.60" height="16.00" fill="#a6c5fa"/><rect x="697.20" y="463.20" width="91.40" height="16.00" fill="#7aaaf7"/><rect x="693.80" y="378.20" width="1.00" height="16.00" fill="#f0c43a"/><line x1="210.50" y1="183" x2="210.50" y2="476" stroke="rgba(30,90,200,0.10)" stroke-width="1"/><line x1="278.50" y1="183" x2="278.50" y2="476" stroke="rgba(30,90,200,0.10)" stroke-width="1"/><line x1="346.50" y1="183" x2="346.50" y2="476" stroke="rgba(30,90,200,0.10)" stroke-width="1"/><line x1="414.50" y1="183" x2="414.50" y2="476" stroke="rgba(30,90,200,0.10)" stroke-width="1"/><line x1="482.50" y1="183" x2="482.50" y2="476" stroke="rgba(30,90,200,0.10)" stroke-width="1"/><line x1="551.50" y1="183" x2="551.50" y2="476" stroke="rgba(30,90,200,0.10)" stroke-width="1"/><line x1="619.50" y1="183" x2="619.50" y2="476" stroke="rgba(30,90,200,0.10)" stroke-width="1"/><line x1="687.50" y1="183" x2="687.50" y2="476" stroke="rgba(30,90,200,0.10)" stroke-width="1"/><line x1="755.50" y1="183" x2="755.50" y2="476" stroke="rgba(30,90,200,0.10)" stroke-width="1"/><line x1="823.50" y1="183" x2="823.50" y2="476" stroke="rgba(30,90,200,0.10)" stroke-width="1"/><line x1="891.50" y1="183" x2="891.50" y2="476" stroke="rgba(30,90,200,0.10)" stroke-width="1"/><line x1="959.50" y1="183" x2="959.50" y2="476" stroke="rgba(30,90,200,0.10)" stroke-width="1"/><line x1="1027.50" y1="183" x2="1027.50" y2="476" stroke="rgba(30,90,200,0.10)" stroke-width="1"/><line x1="1096.50" y1="183" x2="1096.50" y2="476" stroke="rgba(30,90,200,0.10)" stroke-width="1"/><line x1="1164.50" y1="183" x2="1164.50" y2="476" stroke="rgba(30,90,200,0.10)" stroke-width="1"/><line x1="1232.50" y1="183" x2="1232.50" y2="476" stroke="rgba(30,90,200,0.10)" stroke-width="1"/><line x1="1300.50" y1="183" x2="1300.50" y2="476" stroke="rgba(30,90,200,0.10)" stroke-width="1"/><line x1="1368.50" y1="183" x2="1368.50" y2="476" stroke="rgba(30,90,200,0.10)" stroke-width="1"/></svg>
<div class="t" style="left:17.4px;top:149.3px;font-size:11.5px;color:#1f1f1f;">Scheduler</div>
<div class="t" style="left:27.4px;top:166.6px;font-size:11.5px;color:#1f1f1f;">Blocking</div>
<div class="t" style="left:27.4px;top:202.6px;font-size:11.5px;color:#1f1f1f;">Transition</div>
<div class="t" style="left:27.4px;top:221.4px;font-size:11.5px;color:#1f1f1f;">Suspense</div>
<div class="t" style="left:27.4px;top:240.4px;font-size:11.5px;color:#1f1f1f;">Idle</div>
<div class="t" style="left:17.4px;top:261.8px;font-size:11.5px;color:#1f1f1f;">Components</div>
<div class="t" style="left:317.8px;top:184.3px;font-size:11.55px;color:#1f1f1f;">Render</div>
<div class="t" style="left:595.5px;top:184.3px;font-size:11.55px;color:#1f1f1f;">Commit</div>
<div class="t" style="left:706.2px;top:184.3px;font-size:11.55px;color:#1f1f1f;">Remaining Effects</div>
<div class="t" style="left:318.5px;top:279.3px;font-size:11.55px;color:#1f1f1f;">AnExApp</div>
<div class="t" style="left:325.5px;top:296.3px;font-size:11.55px;color:#1f1f1f;">View</div>
<div class="t" style="left:325.5px;top:313.3px;font-size:11.55px;color:#1f1f1f;">View</div>
<div class="t" style="left:499.5px;top:330.3px;font-size:11.55px;color:#1f1f1f;">Circle</div>
<div class="t" style="left:500.3px;top:347.3px;font-size:11.55px;color:#1f1f1f;">Animated(View)</div>
<div class="t" style="left:501.2px;top:364.3px;font-size:11.55px;color:#1f1f1f;">View</div>
<div class="t" style="left:501.2px;top:381.3px;font-size:11.55px;color:#1f1f1f;">Animat...(View)</div>
<div class="t" style="left:502.0px;top:398.3px;font-size:11.55px;color:#1f1f1f;">View</div>
<div class="t" style="left:502.0px;top:415.3px;font-size:11.55px;color:#1f1f1f;">AnExSet</div>
<svg width="1208" height="623" viewBox="200 52 1208 623"><ellipse cx="276.4" cy="207.1" rx="3.5" ry="1.05" transform="rotate(90 276.4 207.1)" fill="none" stroke="#6e6e6e" stroke-width="0.8"/><ellipse cx="276.4" cy="207.1" rx="3.5" ry="1.05" transform="rotate(30 276.4 207.1)" fill="none" stroke="#6e6e6e" stroke-width="0.8"/><ellipse cx="276.4" cy="207.1" rx="3.5" ry="1.05" transform="rotate(150 276.4 207.1)" fill="none" stroke="#6e6e6e" stroke-width="0.8"/><circle cx="276.4" cy="207.1" r="0.9" fill="#6e6e6e"/><ellipse cx="290.3" cy="318.9" rx="3.5" ry="1.05" transform="rotate(90 290.3 318.9)" fill="none" stroke="#6e6e6e" stroke-width="0.8"/><ellipse cx="290.3" cy="318.9" rx="3.5" ry="1.05" transform="rotate(30 290.3 318.9)" fill="none" stroke="#6e6e6e" stroke-width="0.8"/><ellipse cx="290.3" cy="318.9" rx="3.5" ry="1.05" transform="rotate(150 290.3 318.9)" fill="none" stroke="#6e6e6e" stroke-width="0.8"/><circle cx="290.3" cy="318.9" r="0.9" fill="#6e6e6e"/></svg>
<div class="t" style="left:82.6px;top:149.3px;font-size:11.5px;color:#1f1f1f;">— Custom track</div>
<div class="t" style="left:96.4px;top:261.8px;font-size:11.5px;color:#1f1f1f;">— Custom track</div>
<div class="a" style="left:1198.3px;top:141.3px;width:7.6px;height:80.4px;border-radius:4px;background:#bdbdbd"></div>
<div class="a" style="left:0;top:423px;width:1208px;height:28px;background:#ebebeb;border-top:1px solid #d6d6d6;border-bottom:1px solid #e4e4e4"></div>
<div class="a" style="left:0;top:451px;width:1208px;height:172px;background:#fff"></div>
<div class="t" style="left:10.3px;top:432.6px;font-size:12.7px;color:#0b57d0">Summary</div>
<div class="t" style="left:85.3px;top:432.6px;font-size:12.7px;color:#474747">Bottom-up</div>
<div class="t" style="left:168.2px;top:432.6px;font-size:12.7px;color:#474747">Call tree</div>
<div class="t" style="left:237.2px;top:432.6px;font-size:12.7px;color:#474747">Event log</div>
<div class="a" style="left:0;top:448.6px;width:75px;height:2.6px;background:#0b57d0;border-radius:2px 2px 0 0"></div>
<div class="a" style="left:192px;top:457px;width:1px;height:170px;background:#e3e3e3"></div>
<div class="t" style="left:16.5px;top:462.7px;font-size:12.4px;color:#1f1f1f;">Range: 1.58 s – 1.93 s</div>
<div class="a" style="left:16px;top:483.2px;width:11.8px;height:11.8px;background:#f9c80e;border:1px solid #c6c6c6"></div>
<div class="a" style="left:16px;top:505.2px;width:11.8px;height:11.8px;background:#c4c4c4;border:1px solid #c6c6c6"></div>
<div class="a" style="left:16px;top:527.1px;width:11.8px;height:11.8px;background:#ffffff;border:1px solid #c6c6c6"></div>
<div class="t" style="left:37.8px;top:484.0px;font-size:12.8px;color:#1f1f1f;">Scripting</div>
<div class="t" style="left:37.8px;top:506.0px;font-size:12.8px;color:#1f1f1f;">System</div>
<div class="t" style="left:37.8px;top:527.9px;font-size:12.8px;color:#1f1f1f;">Total</div>
<div class="a" style="left:128px;top:481.5px;width:52px;height:16.3px;background:#fdf5d8;border-bottom:2px solid #fad35a"></div>
<div class="a" style="left:179px;top:503.5px;width:1px;height:16.3px;background:#fad35a"></div>
<div class="a" style="left:104px;top:525.5px;width:76px;height:16.3px;background:#fdf5d8;border-bottom:2px solid #fad35a"></div>
<div class="t" style="left:-20.4px;width:200px;text-align:right;top:484.0px;font-size:12.8px;color:#1f1f1f">237 ms</div>
<div class="t" style="left:-20.4px;width:200px;text-align:right;top:506.0px;font-size:12.8px;color:#1f1f1f">3 ms</div>
<div class="t" style="left:-20.4px;width:200px;text-align:right;top:527.9px;font-size:12.8px;color:#1f1f1f">351 ms</div>
<div class="t" style="left:205.6px;top:462.7px;font-size:13.0px;color:#1f1f1f;">1st / 3rd party</div>
<div class="t" style="left:530.5px;top:462.7px;font-size:12.8px;color:#1f1f1f;">Transfer size</div>
<div class="t" style="left:626.8px;top:462.7px;font-size:12.8px;color:#1f1f1f;">Main thread time</div>
<svg width="1208" height="623" viewBox="200 52 1208 623"><path d="M927.2 518.2 H934.2 L930.7 523.2 Z" fill="#474747"/></svg>
<div class="t" style="left:208.1px;top:484.0px;font-size:13.1px;color:#1f1f1f;">[unattributed]</div>
<div class="a" style="left:291.9px;top:482px;width:50.4px;height:15.8px;border-radius:4px;background:#d3e3fd"></div>
<div class="t" style="left:294.4px;top:484.0px;font-size:12.6px;color:#1f1f1f;">1st party</div>
<div class="t" style="left:418.5px;width:200px;text-align:right;top:484.0px;font-size:12.8px;color:#1f1f1f">0.0 kB</div>
<div class="t" style="left:657.5px;top:484.0px;font-size:12.8px;color:#1f1f1f;">239.8 ms</div>
<div class="a" style="left:205px;top:500.2px;width:536px;height:1px;background:#e1e1e1"></div>
</div></body></html>
